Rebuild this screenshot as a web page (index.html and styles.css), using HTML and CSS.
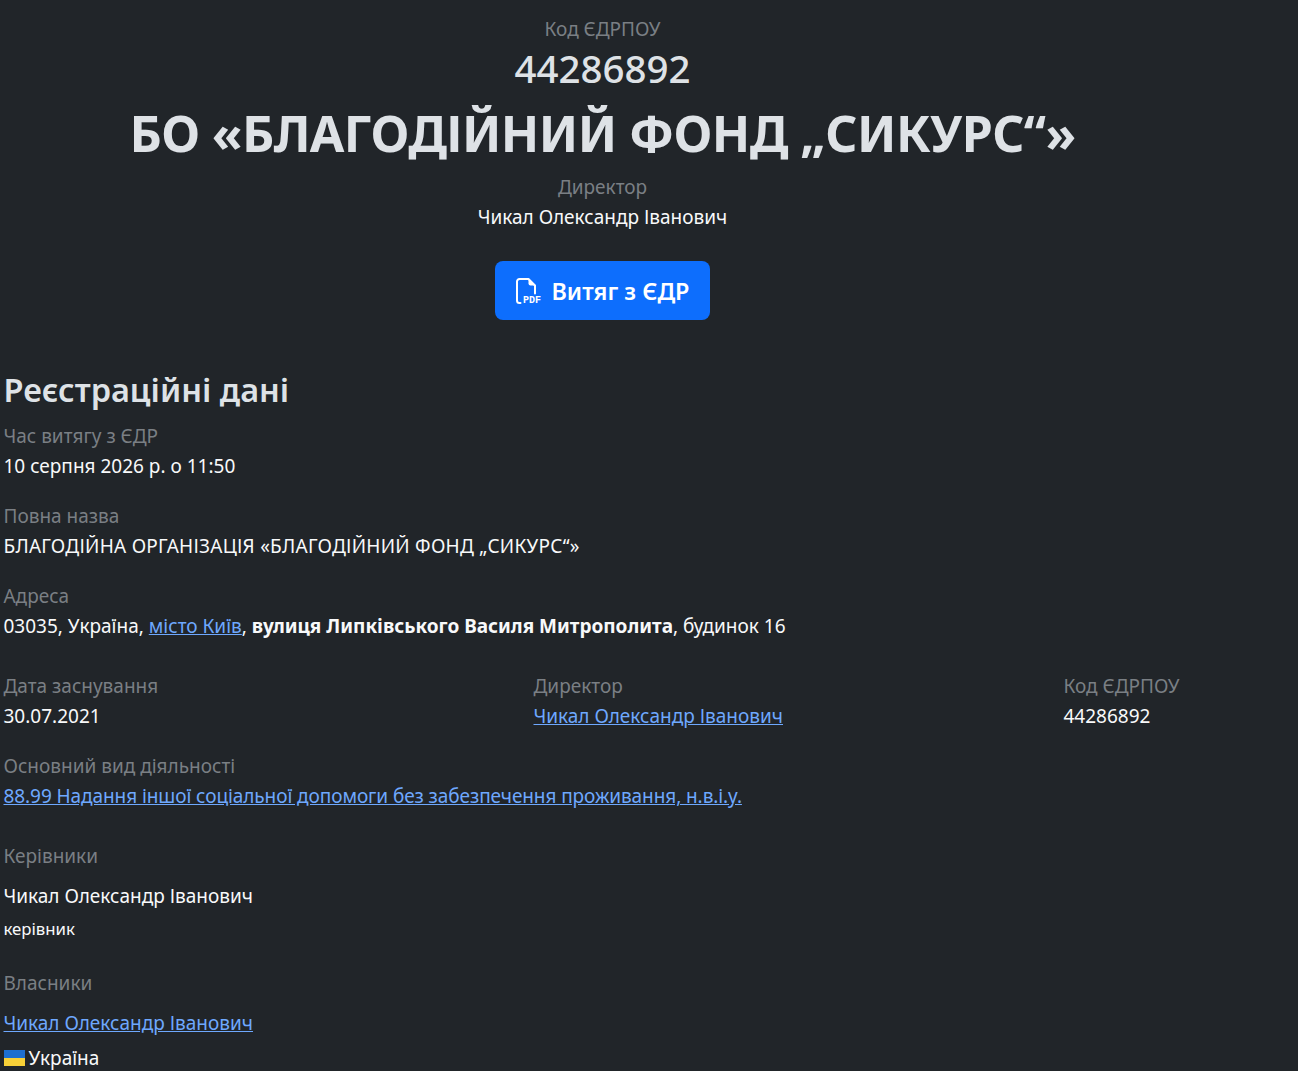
FILE: index.html
```html
<!DOCTYPE html>
<html lang="uk">
<head>
    <meta charset="UTF-8">
    <title>БО «БЛАГОДІЙНИЙ ФОНД „СИКУРС“»</title>
    <link rel="stylesheet" href="styles.css">
</head>
<body>
    <div class="container">
        <header class="hero">
            <div class="label">Код ЄДРПОУ</div>
            <div class="code">44286892</div>
            <h1>БО «БЛАГОДІЙНИЙ ФОНД „СИКУРС“»</h1>
            <div class="label">Директор</div>
            <div>Чикал Олександр Іванович</div>
            <a class="btn" href="#">
                <svg class="pdf-icon" width="28" height="30" viewBox="0 -2 28 30" fill="none">
                    <path d="M4.5 25H3.5A2.5 2.5 0 0 1 1 22.5V3.5A2.5 2.5 0 0 1 3.5 1h9l6.5 6.5v8" stroke="#fff" stroke-width="2" stroke-linecap="round" stroke-linejoin="round"/>
                    <path d="M12.5 1v4.5a2 2 0 0 0 2 2H19z" fill="#fff"/>
                    <text x="7" y="25" class="pdf-text">PDF</text>
                </svg>
                Витяг з ЄДР
            </a>
        </header>

        <h2>Реєстраційні дані</h2>
        <section class="field">
            <div class="label">Час витягу з ЄДР</div>
            <div>10 серпня 2026 р. о 11:50</div>
        </section>
        <section class="field">
            <div class="label">Повна назва</div>
            <div class="caps">БЛАГОДІЙНА ОРГАНІЗАЦІЯ «БЛАГОДІЙНИЙ ФОНД „СИКУРС“»</div>
        </section>
        <section class="field field-wide">
            <div class="label">Адреса</div>
            <div>03035, Україна, <a href="#">місто Київ</a>, <b>вулиця Липківського Василя Митрополита</b>, будинок 16</div>
        </section>
        <div class="columns">
            <section>
                <div class="label">Дата заснування</div>
                <div>30.07.2021</div>
            </section>
            <section>
                <div class="label">Директор</div>
                <div><a href="#">Чикал Олександр Іванович</a></div>
            </section>
            <section>
                <div class="label">Код ЄДРПОУ</div>
                <div>44286892</div>
            </section>
        </div>
        <section class="field field-wide">
            <div class="label">Основний вид діяльності</div>
            <div><a class="activity" href="#">88.99 Надання іншої соціальної допомоги без забезпечення проживання, н.в.і.у.</a></div>
        </section>
        <section class="field">
            <div class="label person-label">Керівники</div>
            <div>Чикал Олександр Іванович</div>
            <div class="small">керівник</div>
        </section>
        <section class="owners">
            <div class="label person-label">Власники</div>
            <div><a href="#">Чикал Олександр Іванович</a></div>
            <div class="country"><span class="flag"></span>Україна</div>
        </section>
    </div>
</body>
</html>
```
FILE: styles.css
```css
html { overflow: hidden; }
body {
    margin: 0;
    background: #212529;
    color: #f8f9fa;
    font-family: "Noto Sans", "Open Sans", sans-serif;
    font-size: 19px;
    line-height: 30px;
}
.container { padding: 14px 0 0 3.5px; width: 1294.5px; box-sizing: border-box; }
.hero { width: 1198px; text-align: center; margin-bottom: 50px; }
.label { color: #7a7f84; }
.code { color: #dee2e6; font-size: 38.5px; font-weight: 500; line-height: 48px; }
h1 { color: #dee2e6; font-size: 50px; font-weight: 700; line-height: 64px; margin: 9px 0 7px; letter-spacing: -0.6px; }
h2 { color: #dee2e6; font-size: 32.5px; font-weight: 600; line-height: 42px; margin: -1px 0 10px; }
.btn {
    display: inline-flex;
    align-items: center;
    gap: 7px;
    margin-top: 29px;
    padding: 0 20px 0 21px;
    height: 59px;
    background: #0d6efd;
    color: #fff;
    border-radius: 8px;
    font-size: 23.4px;
    font-weight: 600;
    text-decoration: none;
}
.pdf-text { fill: #fff; font-size: 10px; font-weight: 700; font-family: "Liberation Mono", monospace; }
a { color: #6ea8fe; }
b { font-weight: 700; }
.caps { letter-spacing: 0.25px; }
.activity { letter-spacing: -0.08px; }
.field { margin-bottom: 20px; }
.field-wide { margin-bottom: 30px; }
.columns { display: grid; grid-template-columns: 530px 530px 1fr; margin-bottom: 20px; }
.person-label { margin-bottom: 10px; }
.small { font-size: 16.8px; line-height: 36px; margin-bottom: -2px; }
.owners { margin-top: 23px; }
.country { display: flex; align-items: center; margin-top: 5px; }
.flag {
    width: 21px;
    height: 16px;
    margin-right: 4px;
    background: linear-gradient(#1d6fd0 50%, #f7d038 50%);
}
```
